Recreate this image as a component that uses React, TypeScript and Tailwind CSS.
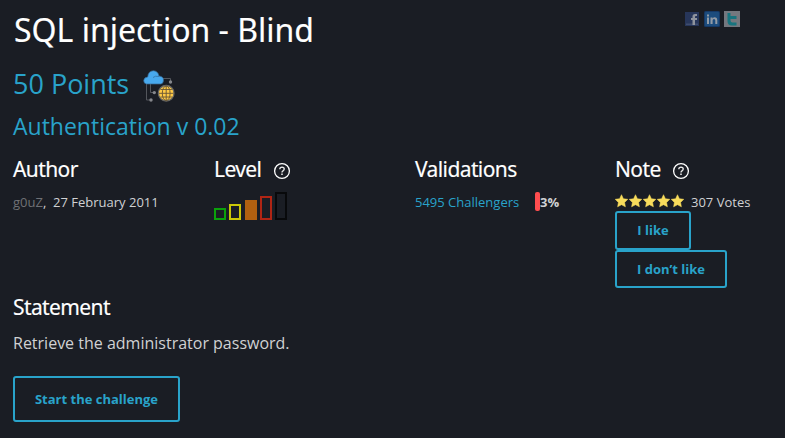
import React from "react";

function Help() {
  return (
    <svg className="mt-[2px] h-[18px] w-[18px]" viewBox="0 0 18 18" fill="none">
      <circle cx="9" cy="9" r="7.4" stroke="#fff" strokeWidth="1.3" />
      <path d="M6.8 7.2Q6.9 5.1 9 5.1Q11.2 5.2 11.2 7Q11.2 8.1 10 8.8Q9 9.4 9 10.5" stroke="#e8e8e8" strokeWidth="1.4" />
      <path d="M8.2 11.6h1.6v1.5H8.2z" fill="#e8e8e8" />
    </svg>
  );
}

function CloudGlobe() {
  return (
    <svg className="h-8 w-8" viewBox="0 0 32 32" fill="none">
      <g stroke="#53565c" strokeWidth="1">
        <path d="M3.5 13v17H7M7.5 13v9.5H10M20 8.5h7.5V11" />
      </g>
      <g fill="#85878c">
        <circle cx="8" cy="30" r="1.7" />
        <circle cx="11.3" cy="22.6" r="1.7" />
        <circle cx="27.5" cy="12" r="1.7" />
      </g>
      <path d="M3.5 14Q.7 13.5.7 10.5Q1 7.3 4.7 7Q5 1 10.5.7Q15 1 16 6Q20.5 6.5 20.5 10Q20.5 13.5 18 14Z" fill="#48a9ee" stroke="#36658e" strokeWidth=".7" />
      <path d="M10 7.5Q12 5.5 16 6.5" stroke="#377db4" />
      <circle cx="23.2" cy="23.3" r="7.8" fill="#ffca45" stroke="#686763" strokeWidth="1.3" />
      <path d="M23.2 16v14.5M16 23.3h14.5M17.5 19.5h11.4M17.5 27h11.4" stroke="#665536" strokeWidth=".9" />
      <ellipse cx="23.2" cy="23.3" rx="3.9" ry="7.3" stroke="#665536" strokeWidth=".9" />
    </svg>
  );
}

function Social() {
  return (
    <div className="flex h-[16px] items-start">
      <svg className="mr-[5px] h-[14px] w-[14px]" viewBox="0 0 14 14">
        <path d="M0 0h14v14H0z" fill="#27365a" />
        <path d="M1 11.5h12V13H1z" fill="#3f4c6d" />
        <path d="M7.5 13V8H6V6h1.5V4.5Q7.5 2 10 2h2v2h-1.3Q10 4 10 5v1h2v2h-2v5z" fill="#8f939c" />
      </svg>
      <svg className="-mt-px mr-[4px] h-[16px] w-[16px]" viewBox="0 0 16 16">
        <rect width="16" height="16" rx="1.5" fill="#153967" />
        <rect x="1" y="1" width="14" height="14" rx="1" fill="#1c4c7d" />
        <path d="M3 6.5h2V13H3zM3 3.5h2v2H3zM6.5 6.5h2v1Q9.5 6.2 11 6.3Q13.3 6.5 13.3 9V13h-2V9.5Q11.3 8 10 8Q8.6 8 8.6 9.5V13H6.5z" fill="#929ba6" />
      </svg>
      <svg className="-mt-px h-[16px] w-[16px]" viewBox="0 0 16 16">
        <path d="M0 0h16v16H0z" fill="#74787f" />
        <path d="M3.5 2h3v3h6v3h-6v1.5q0 2 2 2h4v3H8q-4.5 0-4.5-4.5z" fill="#17747f" />
      </svg>
    </div>
  );
}

function Stars() {
  return (
    <div className="mr-[6px] flex">
      {[0, 1, 2, 3, 4].map((n) => (
        <svg key={n} className="-mt-[4px] h-[14px] w-[14px]" viewBox="0 0 14 14">
          <path d="M6.5 .7L8.4 4.7L12.8 5.3L9.6 8.4L10.4 12.8L6.500 10.7L2.6 12.8L3.4 8.4L.2 5.3L4.6 4.7Z" fill="#f8dc5c" stroke="#f8dc5c" strokeWidth=".5" />
        </svg>
      ))}
    </div>
  );
}

function Heading({ children }: { children: React.ReactNode }) {
  return (
    <h3 className="flex h-[40px] items-center pt-[2px] font-['Noto_Sans',sans-serif] text-[21px] tracking-[-0.6px] text-white [-webkit-text-stroke:0.15px_white]">
      {children}
    </h3>
  );
}

export default function App() {
  return (
    <main className="h-[438px] w-[785px] overflow-hidden bg-[#1a1d24] pl-[13px] font-['Open_Sans',sans-serif] text-[13px] text-[#d0d1d3]">
      <header className="flex h-[60px] justify-between pr-[45px]">
        <h1 className="h-[60px] whitespace-nowrap pl-px font-['Noto_Sans',sans-serif] text-[32px] leading-[60px] text-white [-webkit-text-stroke:0.15px_white]">SQL injection - Blind</h1>
        <div className="pt-[12px]"><Social /></div>
      </header>
      <div className="flex h-[45px] items-center text-[27px] text-[#29a3ca]">
        <span className="pt-[3px]">50 Points</span>
        <span className="ml-[14px] mt-[7px]"><CloudGlobe /></span>
      </div>
      <h2 className="h-[44px] text-[23px] leading-[42px] text-[#29a3ca]">Authentication v 0.02</h2>
      <section className="grid h-[138px] grid-cols-[201px_201px_200px_1fr]">
        <div>
          <Heading><span>Author</span></Heading>
          <p className="h-[26px] leading-[26px]"><span className="text-[#6f7175]">g0uZ</span>,&nbsp; 27 February 2011</p>
        </div>
        <div>
          <Heading><span className="mr-[12px]">Level</span><Help /></Heading>
          <div className="flex h-[31px] items-end gap-[3px]">
            <i className="h-[12px] w-[12px] border-2 border-[#0ba00b]" />
            <i className="h-[16px] w-[12px] border-2 border-[#cbc807]" />
            <i className="ml-px h-[20px] w-[12px] bg-[#b06010]" />
            <i className="h-[24px] w-[12px] border-2 border-[#b02514]" />
            <i className="h-[28px] w-[12px] border-2 border-[#08090b]" />
          </div>
        </div>
        <div>
          <Heading><span>Validations</span></Heading>
          <div className="flex h-[26px] items-center">
            <span className="w-[120px] pt-px text-[#29a3ca]">5495 Challengers</span>
            <i className="-mt-px h-[19px] w-[5px] rounded-[2px] bg-[#ff4d4f]" />
            <b className="pt-px">3%</b>
          </div>
        </div>
        <div>
          <Heading><span className="mr-[11px]">Note</span><Help /></Heading>
          <div className="flex h-[22px] items-center pt-[5px]"><Stars /><span>307 Votes</span></div>
          <button className="block h-[39px] w-[76px] rounded-[3px] border-2 border-[#29a3ca] font-bold text-[#29a3ca]">I like</button>
          <button className="block h-[38px] w-[112px] rounded-[3px] border-2 border-[#29a3ca] pt-px font-bold text-[#29a3ca]">I don’t like</button>
        </div>
      </section>
      <Heading><span>Statement</span></Heading>
      <p className="h-[49px] pt-[4px] text-[16px] leading-[24px]">Retrieve the administrator password.</p>
      <button className="block h-[46px] w-[167px] rounded-[3px] border-2 border-[#29a3ca] pt-[2px] font-bold text-[#29a3ca]">Start the challenge</button>
    </main>
  );
}
